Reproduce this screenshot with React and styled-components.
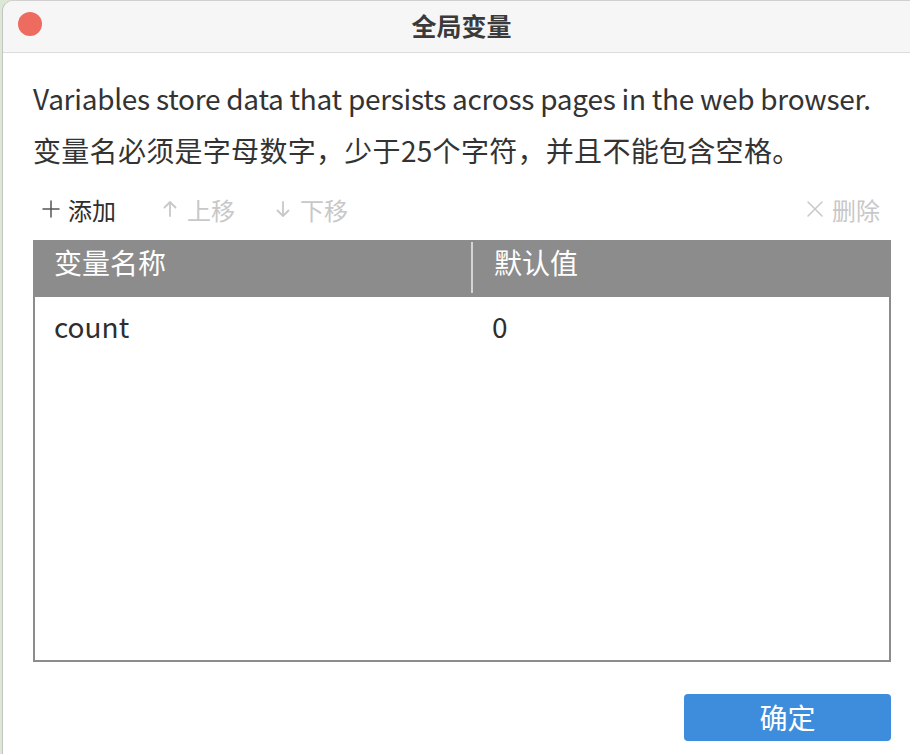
import React from "react";
import styled, { createGlobalStyle } from "styled-components";

const Global = createGlobalStyle`
  html, body { margin: 0; padding: 0; }
  body {
    background: #dce8d4;
    font-family: "Noto Sans CJK SC", "Noto Sans", sans-serif;
    overflow: hidden;
  }
`;

const Window = styled.div`
  margin-left: 2px;
  width: 920px;
  height: 780px;
  background: #fff;
  border-left: 1px solid #c4c4c4;
  border-top: 1px solid #d0d0d0;
  border-top-left-radius: 11px;
  overflow: hidden;
  display: flex;
  flex-direction: column;
`;

const TitleBar = styled.div`
  height: 51px;
  background: #f6f6f6;
  border-bottom: 1px solid #dcdcdc;
  display: flex;
  align-items: center;
  position: relative;
  width: 908px;
`;

const Close = styled.span`
  position: absolute;
  left: 15px;
  top: 11px;
  width: 24px;
  height: 24px;
  border-radius: 50%;
  background: #ee6b60;
`;

const Title = styled.div`
  flex: 1;
  text-align: center;
  font-size: 25px;
  font-weight: 700;
  color: #3a3a3a;
  margin-top: -4px;
  padding-left: 9px;
`;

const Body = styled.div`
  padding: 0 0 0 30px;
  width: 858px;
  display: flex;
  flex-direction: column;
`;

const Desc = styled.p`
  margin: 0;
  font-size: 28px;
  color: #333;
  line-height: 52px;
  white-space: nowrap;
  letter-spacing: ${(p) => p.$ls || 0}px;
  &:first-of-type { margin-top: 19px; }
`;

const Toolbar = styled.div`
  display: flex;
  align-items: center;
  height: 40px;
  margin-top: 13px;
  padding: 0 11px 0 9px;
`;

const Tool = styled.span`
  display: inline-flex;
  align-items: center;
  gap: 8px;
  font-size: 24px;
  color: ${(p) => (p.$disabled ? "#c8c8c8" : "#2e2e2e")};
  margin-right: ${(p) => p.$gap || 0}px;
  margin-left: ${(p) => (p.$right ? "auto" : "0")};
  svg { flex: none; }
`;

const Table = styled.div`
  margin-top: 11px;
  width: 858px;
  height: 422px;
  box-sizing: border-box;
  border: 2px solid #8c8c8c;
  border-top: none;
  display: flex;
  flex-direction: column;
`;

const HeadRow = styled.div`
  display: grid;
  grid-template-columns: 440px 1fr;
  height: 57px;
  background: #8c8c8c;
  margin: 0 -2px;
`;

const HeadCell = styled.div`
  position: relative;
  color: #fff;
  font-size: 28px;
  padding: 2px 0 0 21px;
  line-height: 40px;
  ${(p) =>
    p.$sep &&
    `&::after { content: ""; position: absolute; right: 0; top: 2px; bottom: 4px; width: 2px; background: #d4d4d4; }`}
`;

const Row = styled.div`
  display: grid;
  grid-template-columns: 438px 1fr;
  height: 58px;
  align-items: center;
`;

const Cell = styled.div`
  font-size: 28px;
  color: #2e2e2e;
  padding-left: 19px;
`;

const Footer = styled.div`
  display: flex;
  justify-content: flex-end;
  width: 858px;
  margin-top: 32px;
`;

const OkButton = styled.button`
  width: 207px;
  height: 47px;
  border: none;
  border-radius: 4px;
  background: #3d8ddc;
  color: #fff;
  font-size: 28px;
  line-height: 47px;
  padding: 0;
  font-family: "Noto Sans CJK SC", sans-serif;
  cursor: pointer;
`;

const Icon = ({ d, color, w = 1.5 }) => (
  <svg width="18" height="18" viewBox="0 0 18 18" fill="none" stroke={color} strokeWidth={w} strokeLinecap="round" strokeLinejoin="round">
    <path d={d} />
  </svg>
);

export default function App() {
  return (
    <>
      <Global />
      <Window>
        <TitleBar>
          <Close />
          <Title>全局变量</Title>
        </TitleBar>
        <Body>
          <Desc $ls={-0.27}>Variables store data that persists across pages in the web browser.</Desc>
          <Desc $ls={0.3}>变量名必须是字母数字，少于25个字符，并且不能包含空格。</Desc>
          <Toolbar>
            <Tool $gap={45}>
              <Icon d="M9 1v16M1 9h16" color="#555" />
              添加
            </Tool>
            <Tool $disabled $gap={39}>
              <Icon d="M9 16V2M3.5 7.5L9 2l5.5 5.5" color="#c8c8c8" w={1.8} />
              上移
            </Tool>
            <Tool $disabled>
              <Icon d="M9 2v14M3.5 10.5L9 16l5.5-5.5" color="#c8c8c8" w={1.8} />
              下移
            </Tool>
            <Tool $disabled $right>
              <Icon d="M2 2l14 14M16 2L2 16" color="#c8c8c8" />
              删除
            </Tool>
          </Toolbar>
          <Table>
            <HeadRow>
              <HeadCell $sep>变量名称</HeadCell>
              <HeadCell>默认值</HeadCell>
            </HeadRow>
            <Row>
              <Cell>count</Cell>
              <Cell>0</Cell>
            </Row>
          </Table>
          <Footer>
            <OkButton>确定</OkButton>
          </Footer>
        </Body>
      </Window>
    </>
  );
}
